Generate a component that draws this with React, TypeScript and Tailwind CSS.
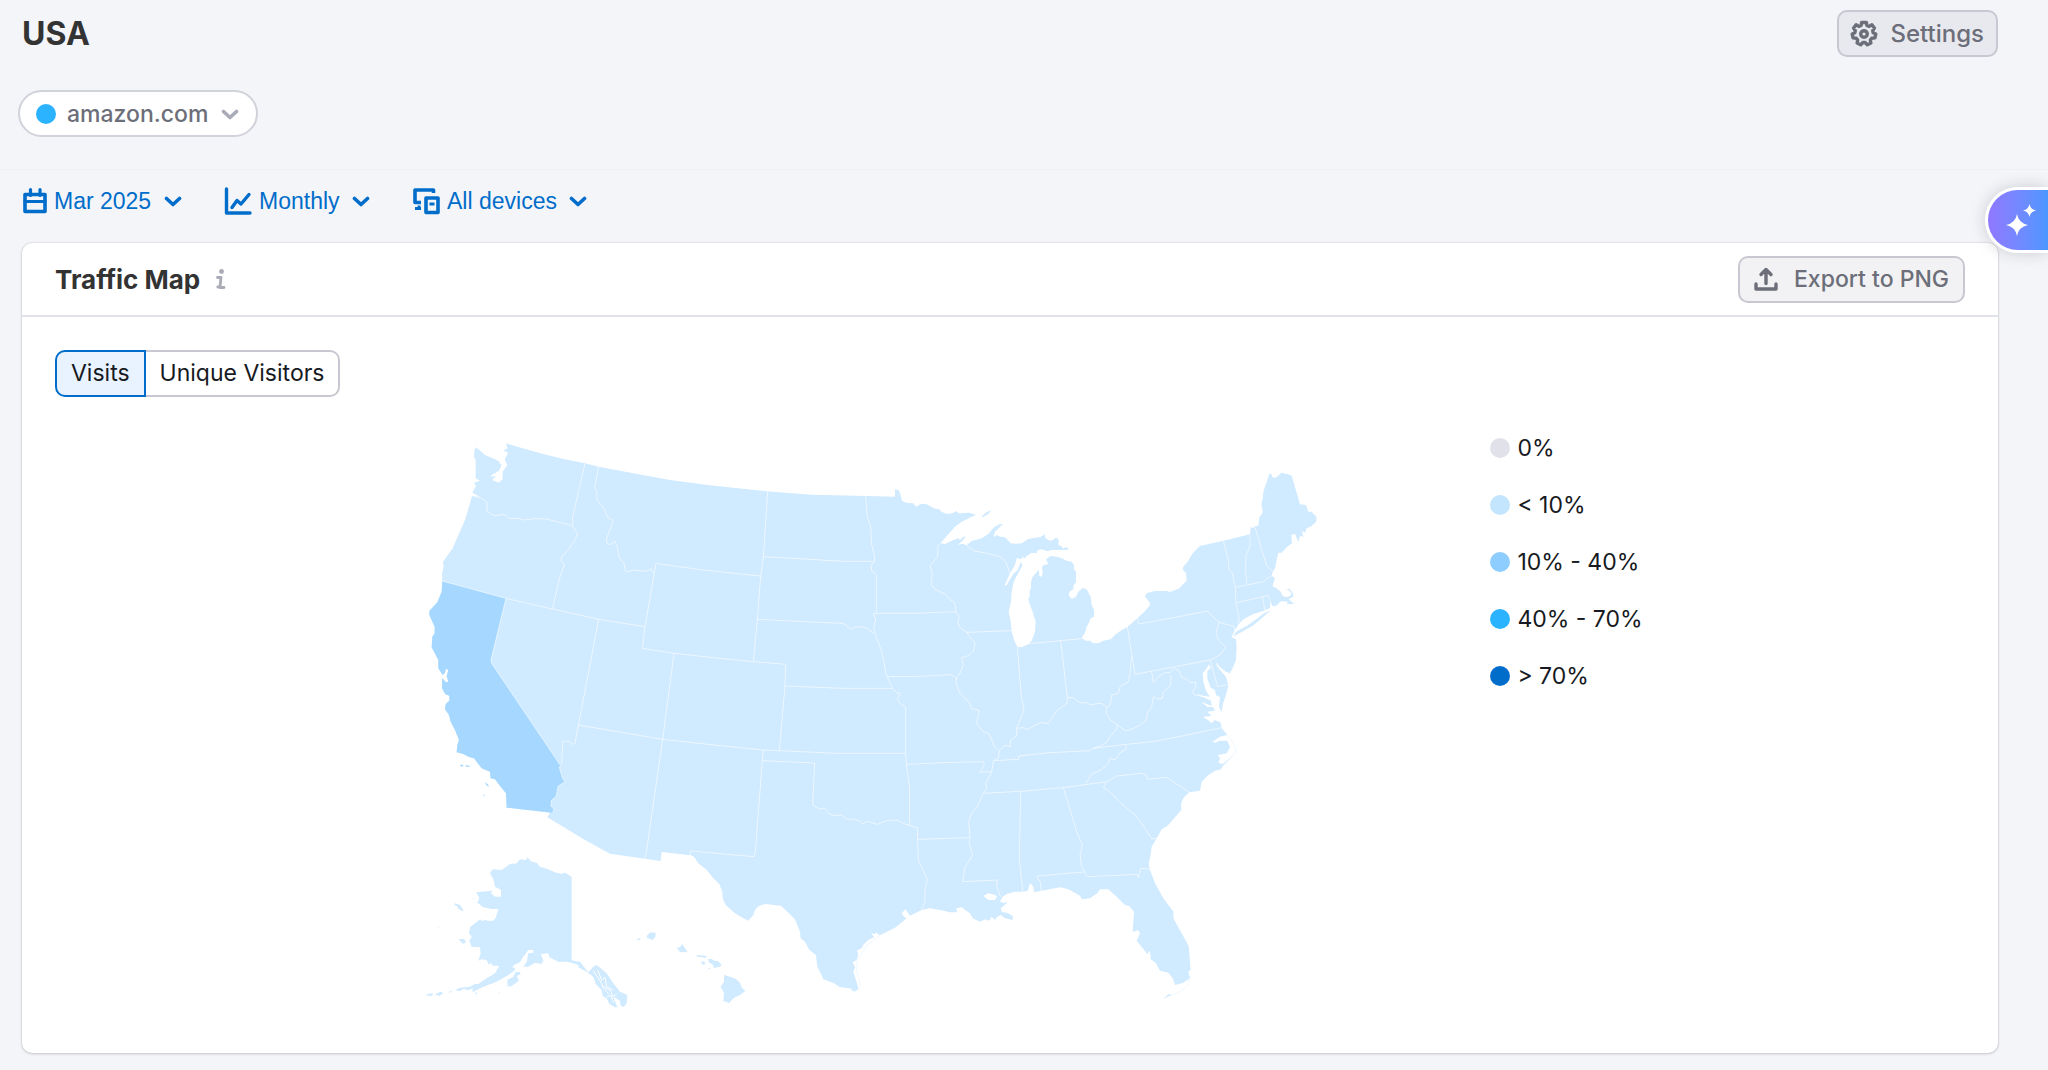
import React, { useState } from "react";

const mainland =
  "M258,40 355,68 430,87 495,100 536,110 640,130 750,150 840,162 890,168 1040,184 1175,194 1337,198 1425,200 1425,178 1436,180 1442,195 1446,213 1462,219 1480,220 1488,230 1502,222 1518,222 1545,236 1558,238 1565,246 1582,252 1597,250 1610,243 1615,250 1648,248 1668,254 " +
  "1625,275 1605,290 1580,318 1562,340 1575,342 1600,330 1616,325 1620,330 1630,320 1637,320 1628,332 1613,345 1628,341 1640,346 1655,333 1685,325 1705,312 1722,292 1738,283 1750,283 1740,290 1725,305 1720,322 1730,315 1740,320 1755,322 1772,340 1790,341 1805,340 1825,327 1845,323 1860,322 1875,313 1876,325 1890,332 1900,330 1905,324 1913,325 1917,335 1913,342 1925,350 1930,356 1940,350 1946,359 1925,360 1895,360 1882,364 1865,358 1853,360 1850,370 1835,368 1820,378 1811,388 1810,378 1803,388 1790,384 1785,405 1770,430 1762,448 1753,468 1760,465 1772,445 1780,432 1793,420 1802,397 1808,405 1797,425 1788,442 1780,460 1775,485 1773,515 1766,545 1772,575 1775,605 1783,632 1792,650 1805,652 1825,643 1835,632 1845,605 1847,575 1838,545 1830,525 1825,508 1830,495 1828,485 1833,475 1833,455 1838,440 1847,430 1857,420 1858,438 1866,440 1868,428 1866,410 1872,405 1885,402 1878,388 1892,378 1910,380 1925,385 1940,392 1955,395 1962,405 1962,418 1968,425 1968,455 1960,468 1960,478 1948,485 1946,495 1955,507 1968,500 1975,485 1988,474 2000,478 2012,500 2015,525 2022,540 2022,560 2012,565 2008,575 2000,590 1995,608 1985,624 1997,632 2012,632 2016,639 2035,640 2050,632 2072,628 2088,612 2105,600 2122,591 " +
  "2152,565 2175,543 2190,525 2188,515 2175,500 2180,490 2205,483 2240,483 2250,486 2278,475 2292,460 2300,452 2298,430 2288,418 2290,410 2303,395 2318,370 2340,348 2410,332 2490,313 2492,292 2502,294 2504,288 2515,287 2518,262 2527,250 2528,240 2524,225 2529,200 2530,185 2548,132 2555,133 2557,142 2568,143 2585,128 2602,132 2615,137 2640,223 2658,225 2665,245 2675,245 2690,262 2688,275 2675,288 2660,295 2655,308 2646,302 2650,320 2640,318 2635,336 2630,325 2626,312 2614,315 2616,340 2600,352 2585,368 2575,368 2570,390 2565,415 2558,425 2555,437 2565,445 2560,458 2558,470 2570,475 2582,485 2588,498 2600,502 2612,497 2614,490 2606,480 2596,478 2608,476 2618,488 2620,500 2606,507 2622,522 2600,522 2604,515 2588,514 2580,515 2575,522 2568,527 2557,528 2552,515 2550,534 2530,543 2500,552 2470,568 2454,585 2444,602 2434,622 2448,628 2450,650 2448,690 2440,710 2430,730 2418,725 2400,712 2388,697 2386,686 2390,706 2400,720 2418,740 2425,765 2422,780 2416,800 2408,825 2404,850 2402,875 2405,895 2425,920 2432,930 2440,950 2445,968 2425,990 2408,1008 2403,1018 2385,1022 2365,1035 2345,1055 2340,1082 2308,1087 " +
  "2292,1102 2283,1120 2284,1140 2265,1162 2242,1188 2225,1198 2210,1225 2195,1250 2192,1275 2186,1300 2190,1320 2205,1360 2230,1405 2260,1445 2260,1465 2285,1510 2306,1548 2312,1620 2305,1625 2310,1645 2290,1658 2265,1665 2258,1645 2245,1628 2220,1622 2208,1600 2192,1587 2190,1562 2182,1572 2150,1532 2160,1510 2155,1500 2138,1506 2142,1445 2128,1428 2115,1425 2090,1400 2065,1378 2040,1378 2032,1390 2010,1405 1985,1408 1980,1397 1945,1378 1920,1372 1865,1382 1842,1387 1840,1370 1830,1360 1823,1383 1808,1385 1785,1385 1760,1392 1748,1400 1740,1415 1755,1420 1758,1410 1760,1420 1742,1435 1745,1445 1765,1450 1780,1460 1777,1470 1755,1465 1742,1455 1730,1462 1725,1470 1715,1460 1708,1472 1695,1468 1680,1475 1658,1465 1650,1450 1635,1440 1625,1432 1608,1435 1612,1447 1590,1447 1560,1440 1530,1435 1505,1440 1470,1457 1462,1445 1456,1438 1445,1450 1452,1460 1460,1465 1425,1493 1380,1516 1370,1510 1378,1506 1360,1512 1352,1506 1362,1522 1345,1530 1332,1542 1325,1555 1310,1562 1315,1572 1310,1590 1298,1597 1305,1610 1300,1625 1308,1650 1316,1677 1302,1685 1290,1675 1260,1672 1242,1660 1210,1648 1202,1630 1192,1610 1188,1575 1168,1560 1155,1535 1142,1525 1140,1505 1125,1468 1105,1448 1083,1427 1035,1422 1016,1428 1005,1440 1000,1455 985,1472 965,1462 945,1450 917,1425 908,1405 907,1385 898,1362 880,1345 860,1320 835,1300 822,1280 812,1276 725,1266 722,1293 675,1286 570,1271 495,1230 382,1162 " +
  "390,1148 260,1133 258,1090 240,1068 225,1048 212,1045 210,1025 185,1015 162,985 145,980 130,972 110,967 112,945 117,930 105,900 92,875 87,855 75,838 77,822 88,812 88,797 76,793 66,775 67,745 78,757 85,755 80,738 85,720 78,716 74,730 68,735 55,715 55,690 35,652 37,620 44,610 44,590 28,555 28,543 52,517 65,485 67,453 66,430 71,410 69,395 98,355 135,270 150,220 156,198 180,200 157,188 168,168 162,158 180,152 167,145 167,90 162,80 163,62 168,52 195,75 225,88 240,95 238,100 245,105 237,122 215,135 213,140 228,138 217,150 236,158 248,148 248,125 262,105 254,88 265,68 250,62 262,55Z";

const california =
  "M67,453 258,505 213,690 215,700 422,1007 418,1012 428,1045 436,1055 415,1068 408,1100 395,1110 393,1128 402,1138 398,1148 260,1133 258,1090 240,1068 225,1048 212,1045 210,1025 185,1015 162,985 145,980 130,972 110,967 112,945 117,930 105,900 92,875 87,855 75,838 77,822 88,812 88,797 76,793 66,775 67,745 78,757 85,755 80,738 85,720 78,716 74,730 68,735 55,715 55,690 35,652 37,620 44,610 44,590 28,555 28,543 52,517 65,485Z " +
  "M120,1004 130,1005 129,1010 122,1009Z M137,1004 154,1010 138,1010Z M196,1056 206,1066 205,1070 198,1064Z M189,1090 196,1099 192,1098Z";

// State lines, roughly west to east
const borders = [
  "156,197 185,205 200,215 202,243 222,257 240,255 252,253 268,265 300,266 310,270 345,266 380,267 457,287",
  "495,100 457,265 460,275 457,287 473,312 460,338 445,358 440,365 425,380 423,392 433,402 420,440 397,537",
  "536,110 524,172 531,185 530,208 552,235 563,262 580,272 560,325 560,340 570,344 585,333 592,350 597,380 613,402 616,423 622,425 640,420 672,423 684,423 692,415 700,430",
  "67,453 258,505 397,537 536,568 675,590",
  "258,505 213,690 215,700 422,1007 418,1012 428,1045 436,1055 415,1068 408,1100 395,1110 393,1128 402,1138 398,1148",
  "536,568 475,887 465,940 458,943 447,934 428,934 425,1003",
  "475,885 728,928 900,947 1030,960 1078,962 1250,970 1457,970",
  "708,400 675,590 667,655 762,670 900,685 1000,695 1097,703 1095,768 1078,962",
  "708,400 840,419 1022,438",
  "762,670 728,928 680,1260 675,1286",
  "1043,184 1030,380 1022,438 1012,568 1000,695",
  "1030,380 1170,388 1270,394 1362,394",
  "1012,568 1150,575 1270,580 1295,598 1302,591 1330,591 1345,598 1361,610",
  "1337,198 1342,260 1352,290 1355,345 1363,375 1364,395 1353,405 1355,422 1369,435 1369,550",
  "1095,768 1270,775 1417,775",
  "1608,545 1480,550 1360,550 1367,570 1361,598 1370,625 1382,655 1390,685 1397,728 1402,740 1417,775 1430,788 1442,790 1432,805 1440,820 1457,832 1457,970 1459,1003 1469,1075 1469,1187",
  "1402,740 1500,739 1595,734 1610,748",
  "1459,1003 1570,998 1690,995 1693,1005 1680,1027 1712,1025",
  "1030,960 1027,992 1184,999 1178,1125 1198,1137 1215,1135 1225,1150 1245,1158 1255,1156 1265,1155 1280,1167 1300,1168 1318,1172 1328,1182 1340,1173 1372,1183 1400,1172 1430,1170 1450,1180 1469,1187 1492,1193 1493,1228 1495,1292 1508,1318 1522,1350 1515,1378 1515,1415 1505,1438",
  "1027,992 1006,1265 1002,1280 812,1263 810,1275",
  "1493,1228 1649,1223",
  "1562,340 1554,346 1553,380 1530,408 1536,425 1535,465 1545,478 1575,492 1590,508 1605,520 1608,545 1618,562 1613,575 1620,592 1640,607 1665,640 1660,665 1642,678 1625,682 1630,705 1620,730 1610,740 1608,760 1620,790 1650,820 1653,835 1678,842 1670,882 1690,905 1705,910 1718,935 1722,950 1738,962 1735,985 1720,992 1715,1027 1705,1045 1697,1060 1700,1075 1690,1090 1672,1130 1655,1150 1646,1175 1650,1223 1648,1240 1658,1275 1635,1312 1628,1355 1732,1350 1730,1370 1742,1400",
  "1640,607 1775,602",
  "1640,346 1660,362 1700,370 1740,380 1755,392 1765,415 1768,430",
  "1792,650 1804,800 1812,840 1800,870 1790,895 1790,918 1772,930 1770,950 1755,946 1738,962",
  "1790,895 1810,893 1822,899 1840,888 1862,878 1885,880 1912,840 1940,822 1942,803 1960,803 1980,818 1998,818 2015,825 2035,820 2050,822 2060,832 2070,825 2075,795 2095,790 2100,770 2125,755 2130,730 2134,680",
  "1922,632 1942,803",
  "1825,641 1922,632 1985,626",
  "2122,590 2145,733 2370,690 2393,770 2425,763",
  "2152,565 2157,582 2250,565 2362,543 2380,562 2397,577 2444,590 2444,604",
  "2397,577 2388,610 2395,630 2418,652 2400,675 2387,682 2372,690",
  "2410,332 2425,390 2427,418 2437,430 2446,472 2448,520 2458,570 2452,582",
  "2446,472 2530,455 2545,443 2555,437",
  "2490,313 2490,350 2478,375 2477,420 2480,462",
  "2505,292 2540,408 2558,423",
  "2448,519 2545,496 2553,522",
  "2527,500 2535,542",
  "2195,725 2200,757 2215,740 2235,728 2250,728 2262,715 2278,722 2285,742 2300,747 2312,758 2328,758 2326,772 2318,785 2322,795 2340,795 2370,805",
  "2253,735 2252,765 2230,787 2226,806 2212,806 2200,800 2195,830 2182,850 2178,872 2160,885 2140,895 2118,903 2092,885",
  "2060,832 2058,850 2070,868 2092,885 2088,900 2068,922 2060,938 2040,948 2020,955",
  "1722,992 1795,988 1796,978 1890,968 2010,962 2020,955 2118,943 2200,935 2300,915 2405,893",
  "2118,945 2118,958 2100,968 2085,990 2070,985 2065,1000 2040,1022 2015,1032 1998,1060",
  "1690,1090 1800,1084 1930,1073 2060,1055 2090,1038 2165,1030 2180,1036 2182,1048 2240,1042 2308,1087",
  "2060,1055 2050,1072 2075,1090 2100,1118 2145,1155 2165,1180 2178,1200 2195,1226 2210,1226",
  "1802,1084 1798,1285 1808,1385",
  "1930,1073 1970,1205 1987,1245 1980,1275 1985,1310 2002,1340 2152,1333 2155,1343 2162,1315 2190,1318",
  "1992,1326 1850,1338 1862,1358 1863,1382",
];

// Bays and sounds cut out of the land
const water =
  "M2367,703 2372,715 2362,722 2362,745 2372,773 2385,780 2388,795 2400,802 2397,830 2406,850 2405,880 2385,870 2375,880 2368,873 2348,860 2375,858 2362,845 2385,842 2380,832 2362,830 2343,815 2375,828 2373,812 2350,802 2325,795 2370,800 2358,782 2350,755 2348,730 2358,718Z " +
  "M2378,935 2400,920 2424,914 2442,945 2447,968 2420,992 2408,1002 2395,998 2400,985 2393,975 2420,970 2430,952 2422,932 2400,932 2385,938Z " +
  "M1690,1398 1705,1390 1718,1393 1732,1398 1725,1410 1705,1410Z";

const islands =
  "M1683,262 1695,250 1713,240 1706,252 1690,260Z " +
  "M2438,620 2450,604 2480,588 2510,567 2532,550 2552,541 2530,560 2500,586 2465,606Z " +
  "M2230,1707 2245,1693 2256,1694Z";

const alaska =
  "M455,110 435,98 425,101 408,98 385,88 360,80 350,68 335,65 322,52 318,60 300,58 290,70 270,72 245,90 218,88 210,100 220,118 225,140 243,150 243,170 225,170 213,160 218,152 168,157 178,173 172,188 190,202 215,207 235,207 228,232 220,242 205,242 195,240 188,243 180,238 150,262 147,280 155,290 148,303 155,320 180,322 182,340 175,362 185,358 200,360 207,375 213,368 218,377 238,377 225,400 200,415 175,432 165,432 150,440 120,443 105,450 120,453 130,447 145,450 158,445 158,457 170,450 190,440 230,425 265,405 285,390 285,383 277,383 282,375 300,367 310,350 325,330 340,330 340,338 325,340 320,365 310,380 325,380 345,368 365,372 372,365 362,342 385,340 388,352 400,358 415,365 440,365 455,368 475,375 475,382 500,395 520,410 527,432 545,450 548,468 560,475 568,492 585,502 592,502 580,470 600,482 602,497 612,500 620,490 622,465 600,455 580,430 560,400 530,375 520,380 505,397 480,365 460,362 455,360Z " +
  "M262,420 280,410 287,395 300,397 302,403 290,408 297,422 275,438 263,440Z M20,463 38,460 38,467 22,467Z M45,463 62,455 70,460 58,468Z M85,456 98,451 90,458Z M166,455 175,462 166,461Z M104,190 120,195 130,210 128,214 115,207 112,199 104,196Z M116,298 133,297 138,308 128,311Z M53,258 60,265 57,265Z M154,177 165,174 160,177Z M236,457 240,457 238,462Z";

const hawaii =
  "M650,300 662,291 660,298 653,302Z M680,287 692,277 707,278 706,291 698,300 682,294Z M770,323 780,322 787,312 795,325 803,337 780,336Z M828,345 861,348 858,353 832,350Z M843,364 855,366 854,374 846,373Z M864,357 875,357 884,363 892,362 905,374 900,380 882,384 877,372 867,368Z M863,384 873,384 868,387Z M912,405 930,410 948,417 960,428 966,444 976,453 960,465 940,475 928,489 910,483 912,458 902,440 912,425Z";

const inlets =
  "M520,392 545,430 548,442 566,462 M533,390 545,420 555,412 560,440 578,450 M548,438 572,452 578,470 590,462 M560,470 572,466 582,488 M366,370 375,355 388,353";

const legend = [
  { label: "0%", dot: "bg-[#e0e1e9]" },
  { label: "< 10%", dot: "bg-[#c4e5fe]" },
  { label: "10% - 40%", dot: "bg-[#8ecdff]" },
  { label: "40% - 70%", dot: "bg-[#2bb3ff]" },
  { label: "> 70%", dot: "bg-[#006dca]" },
];

const Chevron: React.FC<{ className?: string }> = ({ className }) => (
  <svg
    viewBox="0 0 18 12"
    className={`pointer-events-none h-3 w-[18px] ${className ?? ""}`}
    fill="none"
    stroke="currentColor"
    strokeWidth="3.6"
    strokeLinecap="round"
    strokeLinejoin="round"
  >
    <path d="M2.500 3.500 9 9.500 15.500 3.500" />
  </svg>
);

const CalendarIcon = () => (
  <svg viewBox="0 0 24 28" className="h-7 w-6" fill="none" stroke="currentColor" strokeWidth="3.6" strokeLinecap="round">
    <path d="M2 7.500h20v17H2z" strokeLinejoin="round" />
    <path d="M2 14.500h20" strokeWidth="3" />
    <path d="M7.500 2.500v6M17 2.500v6" strokeWidth="3.200" />
  </svg>
);

const TrendIcon = () => (
  <svg viewBox="0 0 28 28" className="size-7" fill="none" stroke="currentColor" strokeWidth="3.4" strokeLinecap="round" strokeLinejoin="round">
    <path d="M2.500 2v24H26" />
    <path d="M8 20.500 13 13.500l4 3.500 8-9.500" />
  </svg>
);

const DevicesIcon = () => (
  <svg viewBox="0 0 28 28" className="size-7" fill="none" stroke="currentColor" strokeWidth="3.6" strokeLinejoin="round">
    <path d="M21.500 6V3H3v12.500h6" />
    <path d="M3 21.500h6M7 18.500V22" strokeWidth="2.800" />
    <path d="M14 11h12v14.500H14z" />
    <path d="M17.500 17h5" strokeWidth="3" />
  </svg>
);

const GearIcon = () => (
  <svg viewBox="0 0 28 28" className="size-7" fill="none" stroke="currentColor" strokeWidth="3.4" strokeLinejoin="round">
    <path d="M11.700 2.500h4.600l.7 3 2.200.9 2.700-1.600 2.500 3.200-1.700 2.600.5 2.200 2.600 1.200-.9 3.900-3.100.3-1.500 1.800.6 3-3.600 1.800-2.200-2.300h-2.200l-2.200 2.300-3.600-1.800.6-3-1.500-1.800-3.100-.3-.9-3.900 2.600-1.200.5-2.200L3.600 8l2.500-3.200 2.700 1.600 2.200-.9z" />
    <circle cx="14" cy="14" r="3.300" />
  </svg>
);

const UploadIcon = () => (
  <svg viewBox="0 0 24 24" className="size-6" fill="none" stroke="currentColor" strokeWidth="3.400" strokeLinecap="round" strokeLinejoin="round">
    <path d="M2 17v5h20v-5M12 16.500V4M7 7.500l5-5 5 5" />
  </svg>
);

interface FilterProps {
  id: string;
  label: string;
  value: string;
  icon: React.ReactNode;
}

const Filter: React.FC<FilterProps> = ({ id, label, value, icon }) => (
  <div className="flex items-center text-[#006dca]">
    <label htmlFor={id} aria-label={label} className="mr-[7px]">
      {icon}
    </label>
    <select
      id={id}
      className="-mr-8 appearance-none bg-transparent pr-11 font-['Liberation_Sans',Arial,sans-serif] text-[23px] leading-7"
    >
      <option>{value}</option>
    </select>
    <Chevron />
  </div>
);

const UsaMap = () => (
  <svg
    viewBox="-129 0 3030 1770"
    className="w-[1010px] min-w-0 fill-[#d0eaff] stroke-white"
    strokeLinejoin="round"
    role="img"
    aria-label="Traffic by state"
  >
    <path d={mainland} stroke="none" />
    <path d={california} className="fill-[#a6d8ff]" stroke="none" />
    <path d={water} className="fill-white" stroke="none" />
    <path d={islands} stroke="none" />
    <g fill="none" strokeWidth="3" strokeOpacity="0.6">
      {borders.map((points) => (
        <polyline key={points} points={points} />
      ))}
    </g>
    <g fill="none" className="stroke-[#d0eaff]" strokeWidth="1.5" strokeOpacity="0.7">
      <path d="M2405,893 2425,918 2446,950 2447,968 2408,1010" />
      <path d="M1380,1516 1340,1545 1312,1590 1308,1615 1322,1672" />
      <path d="M2256,1694 2285,1682 2303,1665 2311,1640" />
    </g>
    <g transform="translate(0 1230)" stroke="none">
      <path d={alaska} />
      <path d={inlets} fill="none" className="stroke-white" strokeWidth="3" />
      <path d={hawaii} />
    </g>
  </svg>
);

const App: React.FC = () => {
  const [metric, setMetric] = useState("Visits");

  return (
    <div className="relative min-h-screen overflow-hidden bg-[#f4f5f9] pb-4 font-['Inter',sans-serif] text-[#171a22]">
      <header className="flex h-[67px] items-center justify-between pr-[50px] pl-[22px]">
        <h1 className="text-[32px] font-bold text-[#333]">USA</h1>
        <button className="flex h-[47px] items-center gap-3 rounded-[10px] border-2 border-[#c7c8d1] bg-[#e8e9ee] pr-3 pl-[11px] text-[24px] font-medium text-[#6c6e79]">
          <GearIcon />
          Settings
        </button>
      </header>

      <div className="border-b border-[#eff0f4] pt-[23px] pb-8 pl-[18px]">
        <div className="flex h-[47px] w-fit items-center rounded-full border-2 border-[#d1d2da] bg-white pr-[17px] pl-4 text-[#6c6e79]">
          <span className="size-5 rounded-full bg-[#2bb3ff]" />
          <select
            aria-label="Domain"
            className="-mr-8 ml-[11px] appearance-none bg-transparent pr-11 text-[23px] leading-7 font-medium"
          >
            <option>amazon.com</option>
          </select>
          <Chevron className="text-[#a9abb6]" />
        </div>
      </div>

      <div className="flex h-[73px] items-center gap-[42px] pb-[11px] pl-[23px]">
        <Filter id="period" label="Period" value="Mar 2025" icon={<CalendarIcon />} />
        <Filter id="granularity" label="Granularity" value="Monthly" icon={<TrendIcon />} />
        <Filter id="devices" label="Devices" value="All devices" icon={<DevicesIcon />} />
      </div>

      <main className="mr-[50px] ml-[22px] rounded-[10px] bg-white shadow-[0_0_2px_rgba(25,27,35,0.2),0_1px_3px_rgba(25,27,35,0.16)]">
        <div className="flex h-[74px] items-center justify-between border-b-2 border-[#e0e1e9] px-[33px]">
          <div className="flex items-center gap-4">
            <h2 className="text-[26px] font-bold text-[#333]">Traffic Map</h2>
            <svg viewBox="0 0 10 20" className="h-5 w-[10px] text-[#a9abb6]" fill="none" stroke="currentColor" strokeWidth="2.800" strokeLinecap="round" strokeLinejoin="round">
              <circle cx="5.500" cy="2.500" r="2.400" fill="currentColor" stroke="none" />
              <path d="M1.500 8.500H5L4 18H1.800M4 18.500h4" />
            </svg>
          </div>
          <button className="flex h-[47px] items-center gap-4 rounded-[10px] border-2 border-[#c7c8d1] bg-[#f2f2f4] px-[14px] text-[23px] font-medium text-[#6c6e79]">
            <UploadIcon />
            Export to PNG
          </button>
        </div>

        <div className="px-[33px] pt-[33px] pb-[33px]">
          <div className="flex h-[47px] w-fit text-[23px]">
            {["Visits", "Unique Visitors"].map((name) => (
              <button
                key={name}
                aria-pressed={metric === name}
                onClick={() => setMetric(name)}
                className={`border-2 px-[14px] first:rounded-l-[10px] last:rounded-r-[10px] ${
                  metric === name
                    ? "border-[#006dca] bg-[#e9f3ff]"
                    : "border-[#c7c8d1] bg-white first:border-r-0 last:border-l-0"
                }`}
              >
                {name}
              </button>
            ))}
          </div>

          <div className="mt-[33px] flex justify-center gap-[103px]">
            <UsaMap />
            <ul className="flex shrink-0 flex-col gap-[29px] pt-1 text-[23px] leading-7">
              {legend.map(({ label, dot }) => (
                <li key={label} className="flex items-center gap-[7px]">
                  <span className={`size-5 rounded-full ${dot}`} />
                  {label}
                </li>
              ))}
            </ul>
          </div>
        </div>
      </main>

      <button
        aria-label="AI assistant"
        className="absolute top-[187px] right-0 flex h-[66px] w-[63px] items-center rounded-l-full border-3 border-r-0 border-white bg-linear-to-r from-[#8f78ff] to-[#4a97ff] pl-[17px] text-white shadow-[0_0_16px_rgba(25,27,35,0.18)]"
      >
        <svg viewBox="0 0 32 34" className="h-[34px] w-8" fill="currentColor">
          <path d="M12 11Q13.500 20 23 22 13.500 24 12 33 10.500 24 1 22 10.500 20 12 11Z" />
          <path d="M24.500 1Q25.500 6.500 31 7.500 25.500 8.500 24.500 14 23.500 8.500 18 7.500 23.500 6.500 24.500 1Z" />
        </svg>
      </button>
    </div>
  );
};

export default App;
